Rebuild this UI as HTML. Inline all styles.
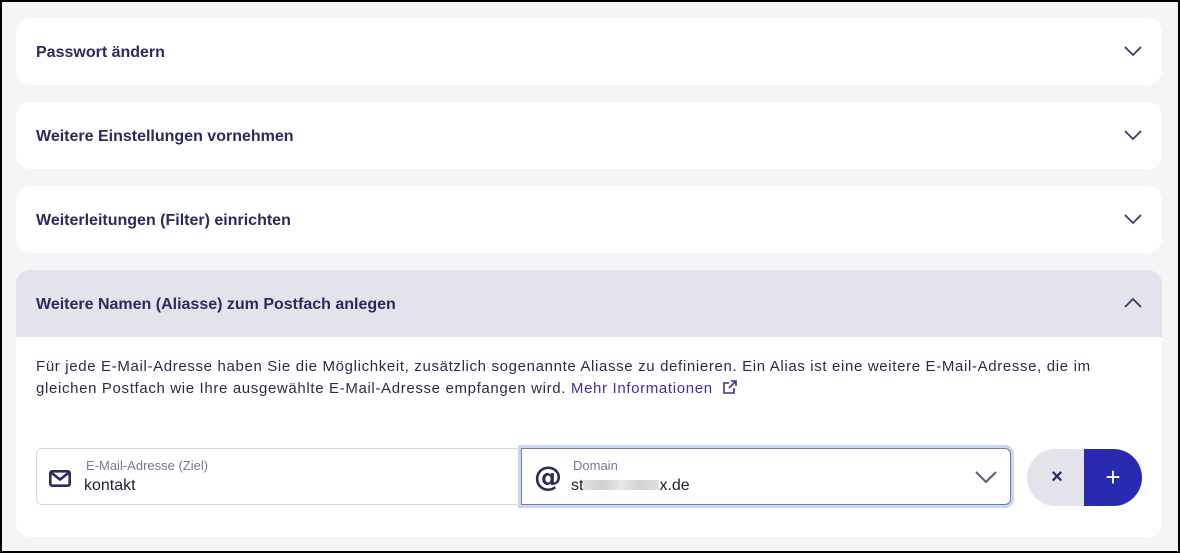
<!DOCTYPE html>
<html><head><meta charset="utf-8"><style>
*{box-sizing:border-box;margin:0;padding:0}
html,body{width:1180px;height:553px;overflow:hidden}
body{background:#000;font-family:"Liberation Sans",sans-serif;}
.page{position:absolute;left:2px;top:2px;width:1176px;height:549px;background:#f5f5f7}
.card{position:absolute;left:14px;width:1146px;background:#fff;border-radius:14px;overflow:hidden}
.hd{height:67px;display:flex;align-items:center;padding-left:20px;padding-top:2px;font-size:16px;font-weight:bold;color:#2b2a5c;position:relative;letter-spacing:0px}
.chev{position:absolute;right:20px;top:27px}
.body{padding:19px 20px 0 20px;font-size:15px;line-height:22px;color:#2b2a4e;letter-spacing:0.65px;width:1120px}
a{color:#3a32a0;text-decoration:none}
.in{position:absolute;top:446px;height:57px;background:#fff;border:1px solid #d7d7e0}
.lbl{position:absolute;font-size:13px;color:#7a7897}
.val{position:absolute;font-size:16px;color:#1e1e2e}
</style></head><body><div class="page">
<div class="card" style="top:16px;height:67px"><div class="hd">Passwort ändern<svg class="chev" width="18" height="12" viewBox="0 0 18 12"><path d="M1 2l8 8 8-8" fill="none" stroke="#3a3a66" stroke-width="1.8"/></svg></div></div>
<div class="card" style="top:100px;height:67px"><div class="hd">Weitere Einstellungen vornehmen<svg class="chev" width="18" height="12" viewBox="0 0 18 12"><path d="M1 2l8 8 8-8" fill="none" stroke="#3a3a66" stroke-width="1.8"/></svg></div></div>
<div class="card" style="top:184px;height:67px"><div class="hd">Weiterleitungen (Filter) einrichten<svg class="chev" width="18" height="12" viewBox="0 0 18 12"><path d="M1 2l8 8 8-8" fill="none" stroke="#3a3a66" stroke-width="1.8"/></svg></div></div>
<div class="card" style="top:268px;height:267px">
<div class="hd" style="background:#e3e3eb">Weitere Namen (Aliasse) zum Postfach anlegen<svg class="chev" width="18" height="12" viewBox="0 0 18 12"><path d="M1 10l8-8 8 8" fill="none" stroke="#3a3a66" stroke-width="1.8"/></svg></div>
<div class="body">Für jede E-Mail-Adresse haben Sie die Möglichkeit, zusätzlich sogenannte Aliasse zu definieren. Ein Alias ist eine weitere E-Mail-Adresse, die im<br>gleichen Postfach wie Ihre ausgewählte E-Mail-Adresse empfangen wird. <a>Mehr Informationen <svg width="16" height="16" viewBox="0 0 16 16" style="vertical-align:-2px;margin-left:4px"><path d="M12 9v5H2V4h5M9 2h5v5M14 2L7 9" fill="none" stroke="#3a32a0" stroke-width="1.6"/></svg></a></div>
</div>
<div class="in" style="left:34px;width:486px;border-radius:6px 0 0 6px">
<svg style="position:absolute;left:12px;top:21px" width="22" height="17" viewBox="0 0 22 17"><rect x="1.3" y="1.3" width="19.4" height="14.4" rx="2" fill="none" stroke="#2b2a5c" stroke-width="2.6"/><path d="M2 2.5l9 7 9-7" fill="none" stroke="#2b2a5c" stroke-width="2.6"/></svg>
<div class="lbl" style="left:49px;top:9px">E-Mail-Adresse (Ziel)</div><div class="val" style="left:47px;top:28px">kontakt</div></div>
<div class="in" style="left:519px;width:490px;border:1px solid #7b7a9c;border-radius:0 6px 6px 0;box-shadow:0 0 0 3px #c3d8fb">
<div style="position:absolute;left:12px;top:11px;font-size:28px;font-weight:bold;color:#2b2a5c;font-family:'DejaVu Sans',sans-serif">@</div>
<div class="lbl" style="left:51px;top:9px">Domain</div><div class="val" style="left:49px;top:28px">st<span style="display:inline-block;width:76px;height:10px;background:linear-gradient(90deg,#e2e2e2,#cfcfcf,#e8e8e8,#d2d2d2,#e0e0e0)"></span>x.de</div>
<svg style="position:absolute;right:12px;top:21px" width="24" height="14" viewBox="0 0 24 14"><path d="M2 2l10 10 10-10" fill="none" stroke="#5a5a80" stroke-width="2"/></svg></div>
<div style="position:absolute;left:1025px;top:447px;width:115px;height:57px;border-radius:29px;overflow:hidden;display:flex">
<div style="width:57px;background:#e3e3eb;color:#2b2a5c;font-size:20px;font-weight:bold;display:flex;align-items:center;justify-content:center;padding-left:3px">×</div>
<div style="width:58px;background:#2a2ab0;color:#fff;font-size:26px;display:flex;align-items:center;justify-content:center">+</div></div>
</div></body></html>
